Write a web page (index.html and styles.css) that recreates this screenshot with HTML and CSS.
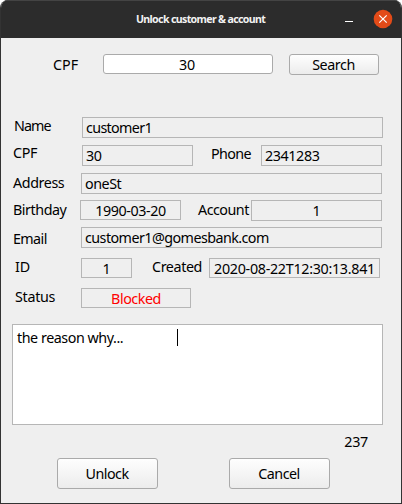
FILE: index.html
```html
<!DOCTYPE html>
<html lang="en">
<head>
<meta charset="utf-8">
<title>Unlock customer &amp; account</title>
<link rel="stylesheet" href="styles.css">
</head>
<body>
<main class="window">
  <header class="titlebar">
    <h1 class="title">Unlock customer &amp; account</h1>
    <svg class="controls" width="52" height="20" viewBox="0 0 52 20">
      <path d="M2 12.5h8" stroke="#fff" stroke-width="1"/>
      <circle cx="40" cy="10" r="9.3" fill="#e34b18"/>
      <path d="M36.3 6.3l7.4 7.4M43.7 6.3l-7.4 7.4" stroke="#fff" stroke-width="1.2"/>
    </svg>
  </header>
  <section class="search">
    <span class="label search-label">CPF</span>
    <span class="field search-input">30</span>
    <span class="button search-button"><span class="w-search">Search</span></span>
  </section>
  <section class="details">
    <div class="row row-name"><span class="label w-name">Name</span><span class="field name"><span class="w-customer">customer1</span></span></div>
    <div class="row row-cpf"><span class="label w-cpf">CPF</span><span class="field cpf">30</span><span class="label w-phone">Phone</span><span class="field phone">2341283</span></div>
    <div class="row row-address"><span class="label w-address">Address</span><span class="field wide"><span class="w-street">oneSt</span></span></div>
    <div class="row row-birthday"><span class="label w-birthday">Birthday</span><span class="field birthday">1990-03-20</span><span class="label w-account">Account</span><span class="field account">1</span></div>
    <div class="row row-email"><span class="label w-email">Email</span><span class="field wide"><span class="w-mail">customer1@gomesbank.com</span></span></div>
    <div class="row row-id"><span class="label w-id">ID</span><span class="field id">1</span><span class="label w-created">Created</span><span class="field created"><span class="w-date">2020-08-22T12:30:13.841</span></span></div>
    <div class="row row-status"><span class="label w-status">Status</span><span class="field status"><span class="w-blocked">Blocked</span></span></div>
  </section>
  <div class="reason"><span class="w-reason">the reason why...</span><i class="caret"></i></div>
  <div class="count">237</div>
  <footer class="actions">
    <span class="button"><span class="w-unlock">Unlock</span></span>
    <span class="button"><span class="w-cancel">Cancel</span></span>
  </footer>
</main>
</body>
</html>
```
FILE: styles.css
```css
* { box-sizing: border-box; }
body { margin: 0; background: #fff; font: 14.3px/21px "Noto Sans", sans-serif; color: #000; }
.window { width: 402px; height: 504px; border: solid #333; border-width: 0 1px 1px; border-radius: 8px 8px 0 0; background: #efefef; overflow: hidden; }
.titlebar { height: 38px; display: flex; align-items: flex-start; padding-top: 8px; background: #2c2c2c; border-top: 1px solid #444; }
.title { margin: 0 0 0 135px; width: 130px; font-size: 10.6px; line-height: 20px; font-weight: 700; color: #f2f2f2; letter-spacing: -.65px; white-space: nowrap; }
.controls { margin-left: 77px; }
.search { display: flex; height: 79px; padding-top: 16px; }
.label { flex: none; white-space: nowrap; height: 21px; }
.search-label { margin-left: 52px; width: 50px; }
.field { flex: none; height: 21px; line-height: 20px; border: 1px solid #b6b6b6; padding-left: 3px; white-space: nowrap; }
.search-input { width: 170px; height: 20px; background: #fff; border-color: #aaa; border-radius: 3px; text-align: center; padding: 0 2px 0 0; letter-spacing: -.3px; }
.button { display: flex; align-items: center; justify-content: center; width: 101px; height: 31px; border: 1px solid #aaa; border-radius: 3px; background: linear-gradient(#fefefe, #ececec); }
.search-button { width: 90px; height: 21px; margin-left: 16px; }
.row { display: flex; height: 21px; margin-bottom: 7px; }
.row-address { margin-bottom: 6px; }
.row-birthday { margin-bottom: 6px; }
.row-email { margin-bottom: 10px; }
.row-id { margin-bottom: 9px; }
.name { width: 301px; }
.cpf { width: 111px; letter-spacing: -.4px; }
.phone { width: 121px; letter-spacing: -.4px; }
.wide { width: 301px; }
.birthday, .account, .id, .created, .status { text-align: center; padding: 0; }
.birthday { width: 101px; height: 20px; letter-spacing: -.4px; }
.account { width: 131px; }
.id { width: 51px; height: 20px; }
.created { width: 171px; height: 20px; }
.status { width: 110px; height: 20px; color: #f00; }
.w-name { margin: -2px 0 0 13px; width: 68px; letter-spacing: -.9px; }
.w-cpf { margin: -3px 0 0 12px; width: 69px; letter-spacing: -.3px; }
.w-phone { margin: -2px 0 0 18px; width: 50px; letter-spacing: -.6px; }
.w-address { margin: -1px 0 0 12px; width: 68px; letter-spacing: -.4px; }
.w-birthday { margin: -1px 0 0 12px; width: 67px; letter-spacing: -.45px; }
.w-account { margin: -1px 0 0 17px; width: 53px; letter-spacing: -.5px; }
.w-email { margin: 1px 0 0 12px; width: 68px; letter-spacing: -.6px; }
.w-id { margin: -2px 0 0 14px; width: 66px; }
.w-created { margin: -2px 0 0 20px; width: 57px; letter-spacing: -.4px; }
.w-status { margin: -2px 0 0 14px; width: 66px; letter-spacing: -.3px; }
.w-street, .w-reason, .w-search, .w-blocked { letter-spacing: -.45px; }
.w-search { margin-right: 1px; }
.w-date { letter-spacing: -.3px; }
.w-mail { letter-spacing: -.55px; }
.w-customer { letter-spacing: -.65px; }
.w-unlock, .w-cancel { letter-spacing: -.5px; margin-right: 1px; }
.reason { display: flex; width: 371px; height: 101px; margin: 15px 0 0 11px; padding: 2px 0 0 4px; border: 1px solid #b6b6b6; background: #fff; }
.w-reason { width: 160px; }
.caret { width: 1px; height: 17px; margin-top: 2px; background: #000; }
.count { height: 33px; padding: 6px 33px 0 0; text-align: right; letter-spacing: -.3px; }
.actions { display: flex; gap: 71px; padding-left: 56px; }
```
